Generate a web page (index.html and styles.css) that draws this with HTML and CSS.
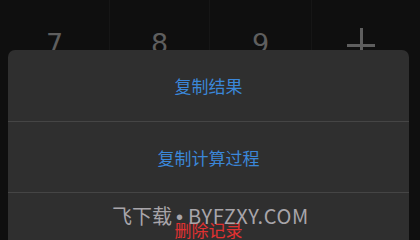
FILE: index.html
```html
<!DOCTYPE html>
<html>
<head>
	<meta charset="utf-8">
	<title>Calculator</title>
	<link rel="stylesheet" href="styles.css">
</head>
<body>

<div class="screen">
    <!-- keypad behind the menu -->
    <div class="keypad">
        <div class="key">7</div>
        <div class="key">8</div>
        <div class="key">9</div>
        <div class="key key-op">
            <span class="plus"></span>
        </div>
    </div>

    <!-- bottom action sheet -->
    <div class="sheet">
        <div class="sheet-item">复制结果</div>
        <div class="sheet-item">复制计算过程</div>
        <div class="sheet-item danger">删除记录</div>
    </div>

    <div class="watermark">飞下载<span class="dot">•</span><span class="site">BYFZXY.COM</span></div>
</div>

</body>
</html>
```

FILE: styles.css
```css
body {
    margin: 0;
    padding: 0;
    background-color: #0f0f0f;
    font-family: "Noto Sans CJK SC", "Noto Sans", sans-serif;
}

.screen {
    position: relative;
    width: 420px;
    height: 240px;
    overflow: hidden;
}

.keypad {
    display: grid;
    grid-template-columns: 110px 100px 102px 108px;
    height: 100px;
}

.key {
    display: flex;
    justify-content: center;
    padding-top: 24px;
    color: #5e5e5e;
    font-family: "DejaVu Sans", sans-serif;
    font-size: 27px;
    line-height: 40px;
    border-right: 1px solid #161616;
}

.key:last-child {
    border-right: none;
}

.key-op {
    padding-right: 10px;
}

.plus {
    position: relative;
    width: 28px;
    height: 30px;
    margin-top: 4px;
}

.plus::before,
.plus::after {
    content: "";
    position: absolute;
    background-color: #5e5e5e;
}

.plus::before {
    left: 0;
    right: 0;
    top: 16px;
    height: 3px;
}

.plus::after {
    top: 0;
    bottom: 0;
    left: 13px;
    width: 3px;
}

.sheet {
    position: absolute;
    left: 8px;
    right: 11px;
    top: 50px;
    bottom: -20px;
    background-color: #2f2f2f;
    border-radius: 7px;
}

.sheet-item {
    height: 70px;
    display: flex;
    align-items: center;
    justify-content: center;
    color: #3b87d9;
    font-size: 17px;
    border-bottom: 1px solid #454545;
}

.sheet-item:first-child {
    height: 71px;
}

.sheet-item.danger {
    color: #e03131;
    border-bottom: none;
    align-items: flex-start;
    padding-top: 24px;
    box-sizing: border-box;
}

.watermark {
    position: absolute;
    left: 112px;
    top: 202px;
    color: #a8a5aa;
    font-size: 20px;
    line-height: 28px;
    white-space: nowrap;
}

.watermark .dot {
    font-family: "Liberation Sans", sans-serif;
    margin: 0 5px 0 4px;
}

.watermark .site {
    letter-spacing: 0.6px;
}
```
